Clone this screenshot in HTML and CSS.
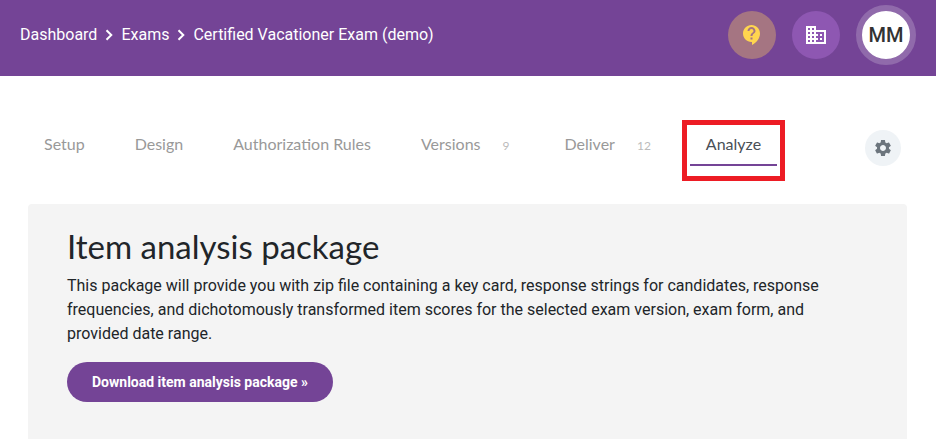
FILE: index.html
```html
<!DOCTYPE html>
<html lang="en">
<head>
    <meta charset="UTF-8">
    <meta name="viewport" content="width=device-width, initial-scale=1.0">
    <title>Certified Vacationer Exam (demo)</title>
    <link rel="stylesheet" href="styles.css">
</head>
<body>
    <header class="topbar">
        <nav class="breadcrumb" aria-label="Breadcrumb">
            <a href="#">Dashboard</a>
            <svg class="chevron" viewBox="0 0 8 12"><path d="M1.5 1.2 6.3 6l-4.8 4.8"/></svg>
            <a href="#">Exams</a>
            <svg class="chevron" viewBox="0 0 8 12"><path d="M1.5 1.2 6.3 6l-4.8 4.8"/></svg>
            <a href="#">Certified Vacationer Exam (demo)</a>
        </nav>
        <div class="actions">
            <button class="round help" aria-label="Help">
                <svg viewBox="0 0 24 24"><path d="M11.5 2C6.81 2 3 5.81 3 10.5S6.81 19 11.5 19h.5v3c4.86-2.34 8-7 8-11.5C20 5.81 16.19 2 11.5 2zm1 14.5h-2v-2h2v2zm0-3.5h-2c0-3.25 3-3 3-5 0-1.1-.9-2-2-2s-2 .9-2 2h-2c0-2.21 1.79-4 4-4s4 1.79 4 4c0 2.5-3 2.75-3 5z"/></svg>
            </button>
            <button class="round company" aria-label="Organization">
                <svg viewBox="0 0 24 24"><path d="M12 7V3H2v18h20V7H12zM6 19H4v-2h2v2zm0-4H4v-2h2v2zm0-4H4V9h2v2zm0-4H4V5h2v2zm4 12H8v-2h2v2zm0-4H8v-2h2v2zm0-4H8V9h2v2zm0-4H8V5h2v2zm10 12h-8v-2h2v-2h-2v-2h2v-2h-2V9h8v10zm-2-8h-2v2h2v-2zm0 4h-2v2h2v-2z"/></svg>
            </button>
            <button class="avatar">MM</button>
        </div>
    </header>

    <main class="content">
        <div class="tabs-row">
            <nav class="tabs" aria-label="Exam sections">
                <a class="tab" href="#">Setup</a>
                <a class="tab" href="#">Design</a>
                <a class="tab" href="#">Authorization Rules</a>
                <a class="tab" href="#">Versions<span class="count">9</span></a>
                <a class="tab" href="#">Deliver<span class="count">12</span></a>
                <a class="tab active" href="#" aria-current="page">Analyze</a>
            </nav>
            <button class="settings" aria-label="Settings">
                <svg viewBox="0 0 24 24"><path d="M19.14 12.94c.04-.3.06-.61.06-.94 0-.32-.02-.64-.07-.94l2.03-1.58c.18-.14.23-.41.12-.61l-1.92-3.32c-.12-.22-.37-.29-.59-.22l-2.39.96c-.5-.38-1.03-.7-1.62-.94l-.36-2.54c-.04-.24-.24-.41-.48-.41h-3.84c-.24 0-.43.17-.47.41l-.36 2.54c-.59.24-1.13.57-1.62.94l-2.39-.96c-.22-.08-.47 0-.59.22L2.74 8.87c-.12.21-.08.47.12.61l2.03 1.58c-.05.3-.09.63-.09.94s.02.64.07.94l-2.03 1.58c-.18.14-.23.41-.12.61l1.92 3.32c.12.22.37.29.59.22l2.39-.96c.5.38 1.03.7 1.62.94l.36 2.54c.05.24.24.41.48.41h3.84c.24 0 .44-.17.47-.41l.36-2.54c.59-.24 1.13-.56 1.62-.94l2.39.96c.22.08.47 0 .59-.22l1.92-3.32c.12-.22.07-.47-.12-.61l-2.01-1.58zM12 15.6c-1.98 0-3.6-1.62-3.6-3.6s1.62-3.6 3.6-3.6 3.6 1.62 3.6 3.6-1.62 3.6-3.6 3.6z"/></svg>
            </button>
        </div>

        <section class="panel">
            <h1>Item analysis package</h1>
            <p>This package will provide you with zip file containing a key card, response strings for candidates, response frequencies, and dichotomously transformed item scores for the selected exam version, exam form, and provided date range.</p>
            <button class="download">Download item analysis package »</button>
        </section>
    </main>
</body>
</html>
```
FILE: styles.css
```css
* {
    box-sizing: border-box;
}
body {
    margin: 0;
    min-height: 100vh;
    display: flex;
    flex-direction: column;
    background-color: #fff;
    color: #212529;
    font-family: Roboto, sans-serif;
    font-size: 16px;
    line-height: 24px;
}
button {
    border: none;
    padding: 0;
    font-family: inherit;
    cursor: pointer;
}
a {
    color: inherit;
    text-decoration: none;
}

/* Top bar */
.topbar {
    display: flex;
    align-items: center;
    justify-content: space-between;
    padding: 5px 20px 11px;
    background-color: #744496;
    color: #fff;
}
.breadcrumb {
    display: flex;
    align-items: center;
    gap: 8px;
}
.chevron {
    width: 8px;
    height: 12px;
    fill: none;
    stroke: #fff;
    stroke-width: 2;
}
.actions {
    display: flex;
    align-items: center;
    gap: 16px;
}
.round {
    display: flex;
    align-items: center;
    justify-content: center;
    width: 48px;
    height: 48px;
    border-radius: 50%;
}
.round svg {
    width: 24px;
    height: 24px;
}
.help {
    background-color: #a57582;
    fill: #ffd54f;
}
.company {
    background-color: #8e57b2;
    fill: #fff;
}
.avatar {
    width: 60px;
    height: 60px;
    border: 6px solid #906aab;
    border-radius: 50%;
    background-color: #fff;
    color: #333;
    font-size: 20px;
    font-weight: 500;
}

/* Tabs */
.content {
    flex: 1;
    display: flex;
    flex-direction: column;
    padding: 44px 29px 0 28px;
}
.tabs-row {
    display: flex;
    align-items: flex-start;
    justify-content: space-between;
    padding: 0 6px 38px 0;
}
.tabs {
    display: flex;
    gap: 18px;
}
.tab {
    padding: 12px 16px 8px;
    border-bottom: 2px solid transparent;
    color: #999;
    font-family: Lato, sans-serif;
    white-space: nowrap;
}
.count {
    margin: 0 5px 0 22px;
    color: #bbb;
    font-size: 12px;
    line-height: 12px;
}
.tab.active {
    position: relative;
    border-bottom-color: #744496;
    color: #495057;
}
.tab.active::after {
    content: "";
    position: absolute;
    top: 0;
    right: -8px;
    bottom: -17px;
    left: -8px;
    border: 5px solid #ed1c24;
}
.settings {
    display: flex;
    align-items: center;
    justify-content: center;
    width: 36px;
    height: 36px;
    margin-top: 10px;
    border-radius: 50%;
    background-color: #eff3f6;
    fill: #6c757d;
}
.settings svg {
    width: 20px;
    height: 20px;
}

/* Panel */
.panel {
    flex: 1;
    padding: 22px 39px 37px;
    border-radius: 4px 4px 0 0;
    background-color: #f4f4f4;
}
.panel h1 {
    margin: 0 0 8px;
    font-family: Lato, sans-serif;
    font-size: 33px;
    font-weight: 400;
    line-height: 40px;
}
.panel p {
    margin: 0 0 16px;
}
.download {
    height: 40px;
    padding: 0 25px;
    border-radius: 20px;
    background-color: #744496;
    color: #fff;
    font-size: 14px;
    font-weight: 700;
}
```
